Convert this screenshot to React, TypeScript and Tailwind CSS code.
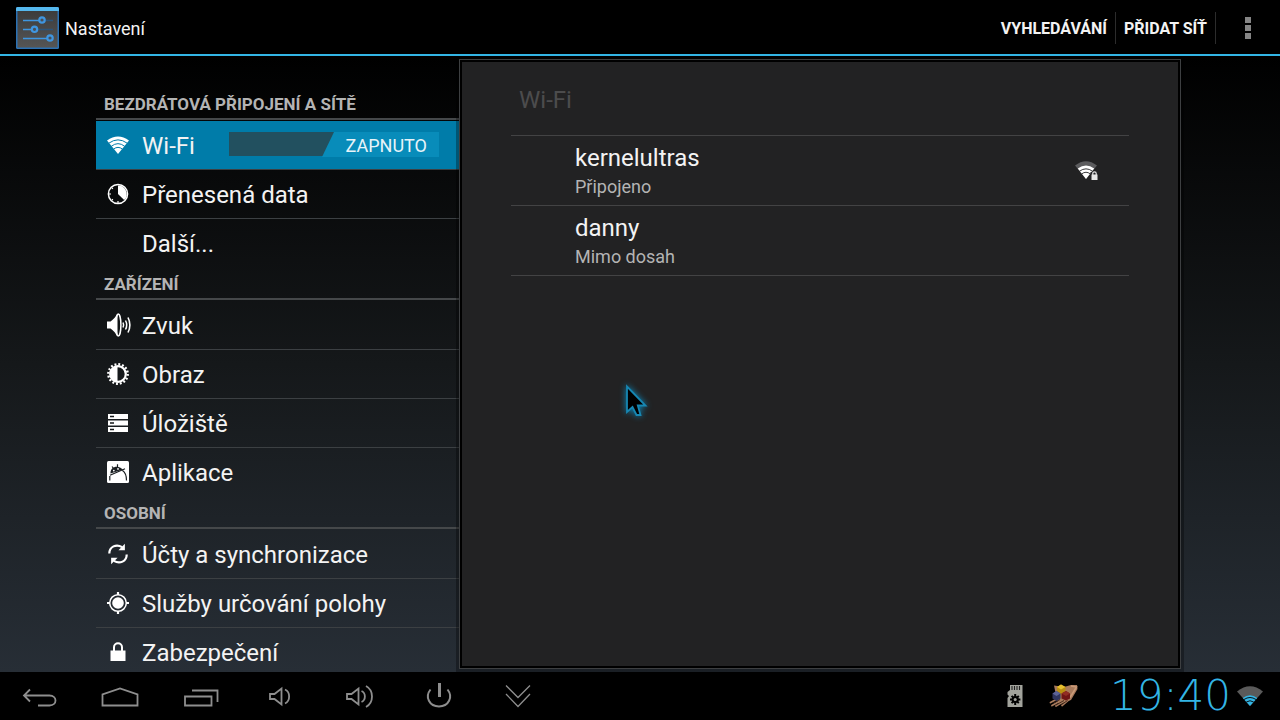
import React from 'react';

type IconProps = { className?: string };

const WifiIcon: React.FC<IconProps> = ({ className }) => (
  <svg viewBox="0 0 22 18" className={className} aria-hidden="true">
    <path d="M0 4.500Q11-3.500 22 4.500L11 18z" fill="#fff" />
    <path
      d="M1.800 7.200Q11 .500 20.200 7.200M4.300 10.300Q11 5 17.700 10.300M6.500 13.200Q11 9.500 15.500 13.200"
      fill="none"
      stroke="#007ca9"
      strokeWidth="1"
    />
  </svg>
);

const DataIcon: React.FC<IconProps> = ({ className }) => (
  <svg viewBox="0 0 22 22" className={className} aria-hidden="true">
    <circle cx="11" cy="11" r="9.6" fill="none" stroke="#fff" strokeWidth="1.5" />
    <path d="M11 11V2.5A8.5 8.5 0 0 1 17.2 17z" fill="#fff" />
    <path d="M2 11h2M11 18v2M4.7 4.7l1.2 1.2M4.7 17.3l1.2-1.2" stroke="#fff" strokeWidth="1.2" />
  </svg>
);

const SoundIcon: React.FC<IconProps> = ({ className }) => (
  <svg viewBox="0 0 24 24" className={className} fill="none" stroke="#fff" aria-hidden="true">
    <path d="M0 8.500h3.500C6 7 8.500 4 10.500 1V23C8.500 20 6 17 3.500 15.500H0z" fill="#fff" stroke="none" />
    <ellipse cx="11.300" cy="12" rx="2.600" ry="11" strokeWidth="1.500" />
    <path d="M16 9.500c.8 1.600.8 3.400 0 5" strokeWidth="1.500" />
    <path d="M18.500 7.500c1.500 2.800 1.500 6.200 0 9" strokeWidth="1.500" />
    <path d="M21 4.500c2.300 4.600 2.300 10.400 0 15" strokeWidth="1.600" />
  </svg>
);

const DisplayIcon: React.FC<IconProps> = ({ className }) => (
  <svg viewBox="0 0 22 22" className={className} aria-hidden="true">
    <circle cx="11" cy="11" r="9.7" fill="none" stroke="#fff" strokeWidth="2.4" strokeDasharray="1.9 1.909" />
    <circle cx="11" cy="11" r="7.8" fill="none" stroke="#fff" strokeWidth="2.2" />
    <path d="M10.500 3.500a7.500 7.500 0 0 0 0 15z" fill="#fff" />
  </svg>
);

const StorageIcon: React.FC<IconProps> = ({ className }) => (
  <svg viewBox="0 0 22 22" className={className} aria-hidden="true">
    <path d="M1 2h20v5H1zM1 8.500h20v5H1zM1 15h20v5H1z" fill="#fff" />
    <path d="M3 4.500h4M3 11h4M3 17.500h4" stroke="#15181b" strokeWidth="1.500" />
  </svg>
);

const AppsIcon: React.FC<IconProps> = ({ className }) => (
  <svg viewBox="0 0 22 22" className={className} fill="none" aria-hidden="true">
    <rect width="22" height="22" rx="1.500" fill="#fff" />
    <path d="M3.500 12.500C3 7.500 8 4.500 13 6.500L16 8.500z" fill="#1a1e21" />
    <path d="M5 5.500L7 8M10.500 3.200V6" stroke="#1a1e21" strokeWidth="1.200" />
    <circle cx="6.800" cy="9.600" r="0.900" fill="#fff" />
    <circle cx="11" cy="7.900" r="0.900" fill="#fff" />
    <path d="M3 14.200L18 7.800M15.500 9.500C18.500 11.500 19.500 15 19.500 19.500M2.800 15V19.500" stroke="#1a1e21" strokeWidth="1.200" />
  </svg>
);

const SyncIcon: React.FC<IconProps> = ({ className }) => (
  <svg viewBox="0 0 22 24" className={className} fill="none" stroke="#fff" strokeWidth="2.400" aria-hidden="true">
    <path d="M1.500 11.500C1.500 4 9 0.500 15.500 4.500" />
    <path d="M18.500 0.800V8H11.500z" fill="#fff" stroke="none" />
    <path d="M20.500 12.500C20.500 20 13 23.500 6.500 19.500" />
    <path d="M3.500 23.200V16H10.500z" fill="#fff" stroke="none" />
  </svg>
);

const LocationIcon: React.FC<IconProps> = ({ className }) => (
  <svg viewBox="0 0 22 22" className={className} aria-hidden="true">
    <circle cx="11" cy="11" r="5.800" fill="#fff" />
    <circle cx="11" cy="11" r="8.300" fill="none" stroke="#fff" strokeWidth="1.500" />
    <path d="M11 0v3M11 19v3M0 11h3M19 11h3" stroke="#fff" strokeWidth="2.200" />
  </svg>
);

const LockIcon: React.FC<IconProps> = ({ className }) => (
  <svg viewBox="0 0 22 22" className={className} aria-hidden="true">
    <path d="M3.500 9.500h15V20h-15z" fill="#fff" />
    <path d="M7 10V6.200a4 4 0 0 1 8 0V10" fill="none" stroke="#fff" strokeWidth="2" />
  </svg>
);

const SettingsLogo: React.FC<IconProps> = ({ className }) => (
  <svg viewBox="0 0 43 42" className={className} aria-hidden="true">
    <defs>
      <linearGradient id="plate" x1="0" y1="0" x2="0" y2="1">
        <stop offset="0" stopColor="#3c3c3c" />
        <stop offset="1" stopColor="#555" />
      </linearGradient>
    </defs>
    <rect width="43" height="42" rx="1.500" fill="#2a71b4" />
    <path d="M0 1.500Q0 0 1.500 0h40Q43 0 43 1.500V4H0z" fill="#55b8ee" />
    <rect x="1.500" y="4" width="40" height="36.500" fill="url(#plate)" />
    <path d="M7 13.500h16M7 22.500h9M7 31.500h24" stroke="#3f96e0" strokeWidth="1.600" />
    <path d="M29 13.500h8M22 22.500h15" stroke="#2c5478" strokeWidth="1.600" />
    <g fill="#4a4f55" stroke="#3f96e0" strokeWidth="2.200">
      <circle cx="26" cy="13" r="2.700" />
      <circle cx="18.500" cy="22.300" r="2.700" />
      <circle cx="34" cy="31" r="2.700" />
    </g>
  </svg>
);

type Item = { label: string; Icon?: React.FC<IconProps>; active?: boolean };

const sections: { title: string; items: Item[] }[] = [
  {
    title: 'Bezdrátová připojení a sítě',
    items: [
      { label: 'Wi-Fi', Icon: WifiIcon, active: true },
      { label: 'Přenesená data', Icon: DataIcon },
      { label: 'Další...' },
    ],
  },
  {
    title: 'Zařízení',
    items: [
      { label: 'Zvuk', Icon: SoundIcon },
      { label: 'Obraz', Icon: DisplayIcon },
      { label: 'Úložiště', Icon: StorageIcon },
      { label: 'Aplikace', Icon: AppsIcon },
    ],
  },
  {
    title: 'Osobní',
    items: [
      { label: 'Účty a synchronizace', Icon: SyncIcon },
      { label: 'Služby určování polohy', Icon: LocationIcon },
      { label: 'Zabezpečení', Icon: LockIcon },
    ],
  },
];

const networks = [
  { name: 'kernelultras', status: 'Připojeno', signal: true },
  { name: 'danny', status: 'Mimo dosah', signal: false },
];

const navButtons = [
  { label: 'Zpět', path: 'M10 5.500L4 11.500L10 17.500M4 11.500H29.500C37.500 11.500 37.500 21.500 29.500 21.500H18' },
  { label: 'Domů', path: 'M2.500 21.500V10.500L20 4.500L37.500 10.500V21.500z' },
  { label: 'Poslední aplikace', path: 'M5 12.500H31.500V21.500H5zM12 6.500H37.500V18' },
  { label: 'Ztlumit', path: 'M10 10H14.500L21.500 4.500V20.500L14.500 15H10zM25 5.500C30.500 8 30.500 17 25 19.500' },
  { label: 'Zesílit', path: 'M7 10H11.500L18.500 4.500V20.500L11.500 15H7zM21.500 7C26 9 26 16 21.500 18M26 2C34 6.500 34 18.500 26 23' },
];

const StatusWifi: React.FC = () => (
  <svg viewBox="0 0 26 20" className="h-5 w-[26px]" aria-hidden="true">
    <path d="M0 5.500Q13-5 26 5.500L13 20z" fill="#5a5a5a" />
    <path d="M5.800 12Q13 6.500 20.200 12L13 20z" fill="#33b5e5" />
    <path d="M7 13.500Q13 9.500 19 13.500M9.300 16Q13 13.500 16.700 16" fill="none" stroke="#000" strokeWidth="0.900" />
  </svg>
);

const SdCard: React.FC = () => (
  <svg viewBox="0 0 16 22" className="h-[22px] w-4" aria-hidden="true">
    <path d="M3 0H15.500V22H0.500V13L2 11L0.500 9.500V7L3 5z" fill="#a2a39c" />
    <path d="M5 1v4M7.500 1v4M10 1v4M12.500 1v4" stroke="#222" strokeWidth="1.100" />
    <g stroke="#000" strokeWidth="2">
      <path d="M8.200 9v11M3 14.500h10.400M4.600 10.900l7.200 7.200M11.800 10.900l-7.200 7.200" />
    </g>
    <circle cx="8.200" cy="14.500" r="3.600" />
    <circle cx="8.200" cy="14.500" r="1.500" fill="#a2a39c" />
  </svg>
);

const HandIcon: React.FC = () => (
  <svg viewBox="0 0 30 24" className="h-6 w-[30px]" aria-hidden="true">
    <path d="M5 1.500L15 3L22 1L28 1L28.500 5L22 16L10 20L8 16z" fill="#a87a5c" />
    <path d="M22 2L27.500 3L21 13.500" fill="none" stroke="#c99a78" strokeWidth="1.500" />
    <path d="M10 14L1.500 18.500M13 16L3 21.500M17 16L7 22M20 15.500L13 21.500" stroke="#a87a5c" strokeWidth="1.800" strokeLinecap="round" />
    <path d="M11 15.500L4 19.300M15 16.500L7 21M18.500 16.500L12 21" stroke="#3a2216" strokeWidth="0.900" />
    <path d="M8 3l4-2.500L16.500 3v5L12 10.500L8 8z" fill="#b98e12" />
    <path d="M8 3l4-2.500L16.500 3L12 5.500z" fill="#e6c030" />
    <path d="M3.500 9.500L7.500 7l4 2.500v5L7.500 17l-4-2.500z" fill="#30355f" />
    <path d="M3.500 9.500L7.500 7l4 2.500L7.500 12z" fill="#5c6398" />
    <path d="M12.500 9.500l4.500-2.500l4 2.500v5L17 16.500l-4.500-2z" fill="#701414" />
    <path d="M12.500 9.500l4.500-2.500l4 2.500L17 12z" fill="#922c24" />
  </svg>
);

const TopBar: React.FC = () => (
  <header className="flex h-14 shrink-0 items-center border-b-2 border-[#33b5e5] bg-black pt-0.5 pr-2 pl-4">
    <SettingsLogo className="h-[42px] w-[43px]" />
    <h1 className="ml-1.5 pt-0.5 text-lg text-[#f3f3f3]">Nastavení</h1>
    <div className="ml-auto flex h-8 items-center text-base font-bold text-[#f3f3f3]">
      <button type="button" className="h-full border-r border-[#2c2c2c] px-2 pt-0.5 uppercase">Vyhledávání</button>
      <button type="button" className="h-full border-r border-[#2c2c2c] px-2 pt-0.5 uppercase">Přidat síť</button>
      <button type="button" aria-label="Další možnosti" className="flex w-14 flex-col items-center gap-0.5 pl-2">
        <span className="size-1.5 bg-[#858585]" />
        <span className="size-1.5 bg-[#858585]" />
        <span className="size-1.5 bg-[#858585]" />
      </button>
    </div>
  </header>
);

const WifiSwitch: React.FC = () => (
  <label className="mr-5 mb-0.5 flex h-6 w-[210px] shrink-0 cursor-pointer justify-end bg-[#22505f]">
    <input type="checkbox" role="switch" defaultChecked aria-label="Wi-Fi" className="sr-only" />
    <span className="flex h-[25px] w-[117px] items-center justify-end bg-[#088cba] pt-0.5 pr-3 text-lg text-[#e8f4f9] [clip-path:polygon(12px_0,100%_0,100%_100%,0_100%)]">
      ZAPNUTO
    </span>
  </label>
);

const Sidebar: React.FC = () => (
  <nav className="w-[363px] shrink-0 overflow-hidden pt-8">
    {sections.map((section) => (
      <section key={section.title}>
        <h2 className="mb-px flex h-8 items-center border-b-2 border-[#45484a] pt-1 pl-2 text-[17px] font-bold text-[#b4b4b4] uppercase">
          {section.title}
        </h2>
        <ul>
          {section.items.map(({ label, Icon, active }) => (
            <li
              key={label}
              className={`flex h-[49px] items-center border-b border-[#3c4043] last:border-transparent ${active ? 'bg-[#007ca9]' : ''}`}
            >
              <a href="#" className="flex h-full flex-1 items-center pl-[11px] text-2xl text-[#f3f3f3]">
                <span className="mr-[11px] flex w-6 items-center">
                  {Icon && <Icon className={Icon === SoundIcon ? 'size-6' : 'size-[22px]'} />}
                </span>
                <span className="pt-0.5">{label}</span>
              </a>
              {active && <WifiSwitch />}
            </li>
          ))}
        </ul>
      </section>
    ))}
  </nav>
);

const WifiPanel: React.FC = () => (
  <main className="relative my-[3px] flex-1 border border-[#3d3f41] bg-black p-0.5 shadow-[0_0_0_3px_#00000050]">
    <div className="h-full bg-[#222223] px-[49px] pt-1">
      <h2 className="flex h-[70px] items-center border-b border-[#434344] pb-0.5 pl-2 text-2xl text-[#4c4c4d]">Wi-Fi</h2>
      <ul>
        {networks.map((network) => (
          <li key={network.name} className="border-b border-[#434344]">
            <button type="button" className="flex h-[69px] w-full items-center pr-[31px] pl-16 text-left">
              <span className="flex flex-1 flex-col">
                <span className="text-2xl leading-8 text-[#f3f3f3]">{network.name}</span>
                <span className="text-lg leading-[26px] text-[#b4b4b4]">{network.status}</span>
              </span>
              {network.signal && (
                <svg viewBox="0 0 23 19" className="h-[19px] w-[23px]" aria-hidden="true">
                  <path d="M0 4.500Q11-4 22 4.500L11 18z" fill="#5c5c5e" />
                  <path d="M2.800 7.500Q11 1.500 19.200 7.500L11 18z" fill="#fff" />
                  <path d="M4.500 10.200Q11 5.500 17.500 10.200M6.500 13Q11 9.500 15.500 13" fill="none" stroke="#222225" strokeWidth="0.900" />
                  <rect x="15.500" y="11" width="8" height="8" fill="#222225" />
                  <path d="M16.500 13.500h6V19h-6z" fill="#e8e8e8" />
                  <path d="M17.800 14v-1.500a1.700 1.700 0 0 1 3.400 0V14" fill="none" stroke="#e8e8e8" strokeWidth="1.200" />
                </svg>
              )}
            </button>
          </li>
        ))}
      </ul>
    </div>
  </main>
);

const SystemBar: React.FC = () => (
  <footer className="relative flex h-12 shrink-0 items-center bg-black">
    {navButtons.map((button) => (
      <button key={button.label} type="button" aria-label={button.label} className="flex h-full w-20 items-center justify-center">
        <svg viewBox="0 0 40 24" className="h-6 w-10" fill="none" stroke="#8e8e8e" strokeWidth="1.800">
          <path d={button.path} />
        </svg>
      </button>
    ))}
    <button type="button" aria-label="Vypnout" className="flex h-full w-20 items-center justify-center">
      <svg viewBox="0 0 40 26" className="h-[26px] w-10" fill="none" stroke="#8e8e8e" strokeWidth="2">
        <path d="M10.500 6.500C4.500 14 9.500 23.500 19 23.500S33.500 14 27.500 6.500" />
        <path d="M19.500 0V14" strokeWidth="3" />
      </svg>
    </button>
    <button type="button" aria-label="Skrýt lištu" className="flex h-full w-20 items-center justify-center">
      <svg viewBox="0 0 40 24" className="h-6 w-10" fill="none" stroke="#8e8e8e" strokeWidth="1.300">
        <path d="M6 1.500L18 13.500L30 1.500M6 10L18 22.500L30 10" />
      </svg>
    </button>
    <div className="ml-auto flex h-full items-center pr-[17px]">
      <SdCard />
      <span className="ml-[26px]">
        <HandIcon />
      </span>
      <time className="mx-1.5 w-[146px] text-right font-['DejaVu_Sans',sans-serif] text-[42px] leading-none font-extralight text-[#33b5e5]">
        19:40
      </time>
      <StatusWifi />
    </div>
  </footer>
);

const Pointer: React.FC = () => (
  <svg
    viewBox="0 0 30 40"
    className="pointer-events-none absolute top-[380px] left-[621px] h-10 w-[30px] drop-shadow-[0_0_3px_#0a86b8]"
    aria-hidden="true"
  >
    <path d="M6 6.500V32L11.500 27L15.500 35H19.500L16.800 25.500H24.500z" fill="#000" stroke="#1787b3" strokeWidth="1.800" />
  </svg>
);

const App: React.FC = () => {
  return (
    <div className="relative flex h-screen flex-col overflow-hidden bg-black font-['Roboto',sans-serif]">
      <TopBar />
      <div className="flex min-h-0 flex-1 bg-linear-to-b/srgb from-black via-[#15181a] via-50% to-[#272e36] pr-[99px] pl-24">
        <Sidebar />
        <WifiPanel />
      </div>
      <SystemBar />
      <Pointer />
    </div>
  );
};

export default App;
